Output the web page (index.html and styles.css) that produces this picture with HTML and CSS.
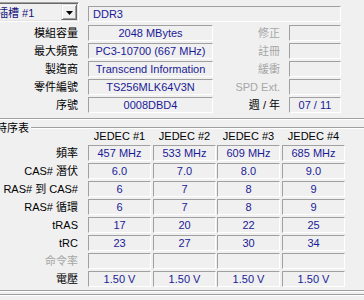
FILE: index.html
```html
<!DOCTYPE html>
<html>
<head>
<meta charset="utf-8">
<link rel="stylesheet" href="styles.css">
</head>
<body>
<div class="page">
  <div class="top">
    <div class="combo">
      <span class="combo-text">插槽 #1</span>
      <span class="combo-btn"><svg width="7" height="4" viewBox="0 0 7 4"><path d="M0 0H7L3.5 4Z" fill="#000"/></svg></span>
    </div>
    <div class="field span3 left">DDR3</div>

    <div class="label">模組容量</div>
    <div class="field">2048 MBytes</div>
    <div class="label r dis">修正</div>
    <div class="field"></div>

    <div class="label">最大頻寬</div>
    <div class="field">PC3-10700 (667 MHz)</div>
    <div class="label r dis">註冊</div>
    <div class="field"></div>

    <div class="label">製造商</div>
    <div class="field">Transcend Information</div>
    <div class="label r dis">緩衝</div>
    <div class="field"></div>

    <div class="label">零件編號</div>
    <div class="field">TS256MLK64V3N</div>
    <div class="label r dis">SPD Ext.</div>
    <div class="field"></div>

    <div class="label">序號</div>
    <div class="field">0008DBD4</div>
    <div class="label r">週 / 年</div>
    <div class="field">07 / 11</div>
  </div>

  <div class="sep first"></div>

  <div class="group-title">
    <span class="title">時序表</span>
    <span class="group-line"></span>
  </div>

  <div class="timings">
    <div class="hlabel"></div>
    <div class="head">JEDEC #1</div>
    <div class="head">JEDEC #2</div>
    <div class="head">JEDEC #3</div>
    <div class="head">JEDEC #4</div>

    <div class="label">頻率</div>
    <div class="field cell">457 MHz</div>
    <div class="field cell">533 MHz</div>
    <div class="field cell">609 MHz</div>
    <div class="field cell">685 MHz</div>

    <div class="label">CAS# 潛伏</div>
    <div class="field cell">6.0</div>
    <div class="field cell">7.0</div>
    <div class="field cell">8.0</div>
    <div class="field cell">9.0</div>

    <div class="label">RAS# 到 CAS#</div>
    <div class="field cell">6</div>
    <div class="field cell">7</div>
    <div class="field cell">8</div>
    <div class="field cell">9</div>

    <div class="label">RAS# 循環</div>
    <div class="field cell">6</div>
    <div class="field cell">7</div>
    <div class="field cell">8</div>
    <div class="field cell">9</div>

    <div class="label">tRAS</div>
    <div class="field cell">17</div>
    <div class="field cell">20</div>
    <div class="field cell">22</div>
    <div class="field cell">25</div>

    <div class="label">tRC</div>
    <div class="field cell">23</div>
    <div class="field cell">27</div>
    <div class="field cell">30</div>
    <div class="field cell">34</div>

    <div class="label dis">命令率</div>
    <div class="field cell"></div>
    <div class="field cell"></div>
    <div class="field cell"></div>
    <div class="field cell"></div>

    <div class="label">電壓</div>
    <div class="field cell">1.50 V</div>
    <div class="field cell">1.50 V</div>
    <div class="field cell">1.50 V</div>
    <div class="field cell">1.50 V</div>
  </div>

  <div class="sep groupbottom"></div>
  <div class="sep last"></div>
</div>
</body>
</html>
```

FILE: styles.css
```css
html, body {
  margin: 0;
  padding: 0;
  background: #f0f0f0;
}

.page {
  width: 364px;
  height: 300px;
  overflow: hidden;
  font-family: "Liberation Sans", "Noto Sans CJK TC", sans-serif;
  font-size: 11px;
  color: #000;
}

.top {
  display: grid;
  grid-template-columns: 88px 125px 76px 52px;
  grid-template-rows: 21px repeat(5, 16px);
  row-gap: 2px;
  padding-top: 2px;
}

.combo {
  box-sizing: border-box;
  width: 89px;
  height: 20px;
  margin-left: -10px;
  display: flex;
  align-items: center;
  padding: 1px;
  border: 1px solid;
  border-color: #a0a0a0 #ffffff #ffffff #a0a0a0;
  box-shadow: inset 1px 1px #696969, inset -1px -1px #e3e3e3;
  background: #f0f0f0;
}

.combo-text {
  padding-left: 5px;
  padding-top: 2px;
  color: #12127a;
  white-space: nowrap;
  line-height: 14px;
}

.combo-btn {
  margin-left: auto;
  box-sizing: border-box;
  width: 16px;
  height: 16px;
  display: flex;
  align-items: center;
  justify-content: center;
  border: 1px solid;
  border-color: #e3e3e3 #696969 #696969 #e3e3e3;
  box-shadow: inset 1px 1px #ffffff, inset -1px -1px #a0a0a0;
  background: #f0f0f0;
}

.combo-btn svg {
  display: block;
  margin-top: 1px;
}

.field {
  box-sizing: border-box;
  height: 16px;
  border: 1px solid;
  border-color: #a0a0a0 #ffffff #ffffff #a0a0a0;
  line-height: 14px;
  text-align: center;
  color: #1a1a96;
  white-space: nowrap;
  overflow: hidden;
}

.field.left {
  text-align: left;
  padding-left: 4px;
}

.span3 {
  grid-column: 2 / span 3;
  margin-top: 4px;
}

.label {
  text-align: right;
  padding-right: 10px;
  line-height: 16px;
  white-space: nowrap;
}

.label.r {
  padding-right: 9px;
}

.dis {
  color: #a7a7a7;
}

.sep {
  height: 0;
  border-top: 1px solid #a0a0a0;
  border-bottom: 1px solid #ffffff;
}

.sep.first {
  margin-top: 5px;
}

.group-title {
  display: flex;
  align-items: center;
  height: 16px;
}

.title {
  margin-left: -4px;
  line-height: 16px;
  white-space: nowrap;
}

.group-line {
  flex: 1;
  height: 0;
  margin-left: 2px;
  border-top: 1px solid #a0a0a0;
  border-bottom: 1px solid #ffffff;
}

.timings {
  display: grid;
  grid-template-columns: 88px 65px 64px 65px 63px;
  grid-template-rows: 14px repeat(8, 16px);
  row-gap: 2px;
  margin-top: -7px;
}

.head {
  width: 63px;
  text-align: center;
  line-height: 14px;
  white-space: nowrap;
}

.cell {
  width: 63px;
}

.sep.groupbottom {
  margin-top: 3px;
}

.sep.last {
  margin-top: 2px;
}
```
